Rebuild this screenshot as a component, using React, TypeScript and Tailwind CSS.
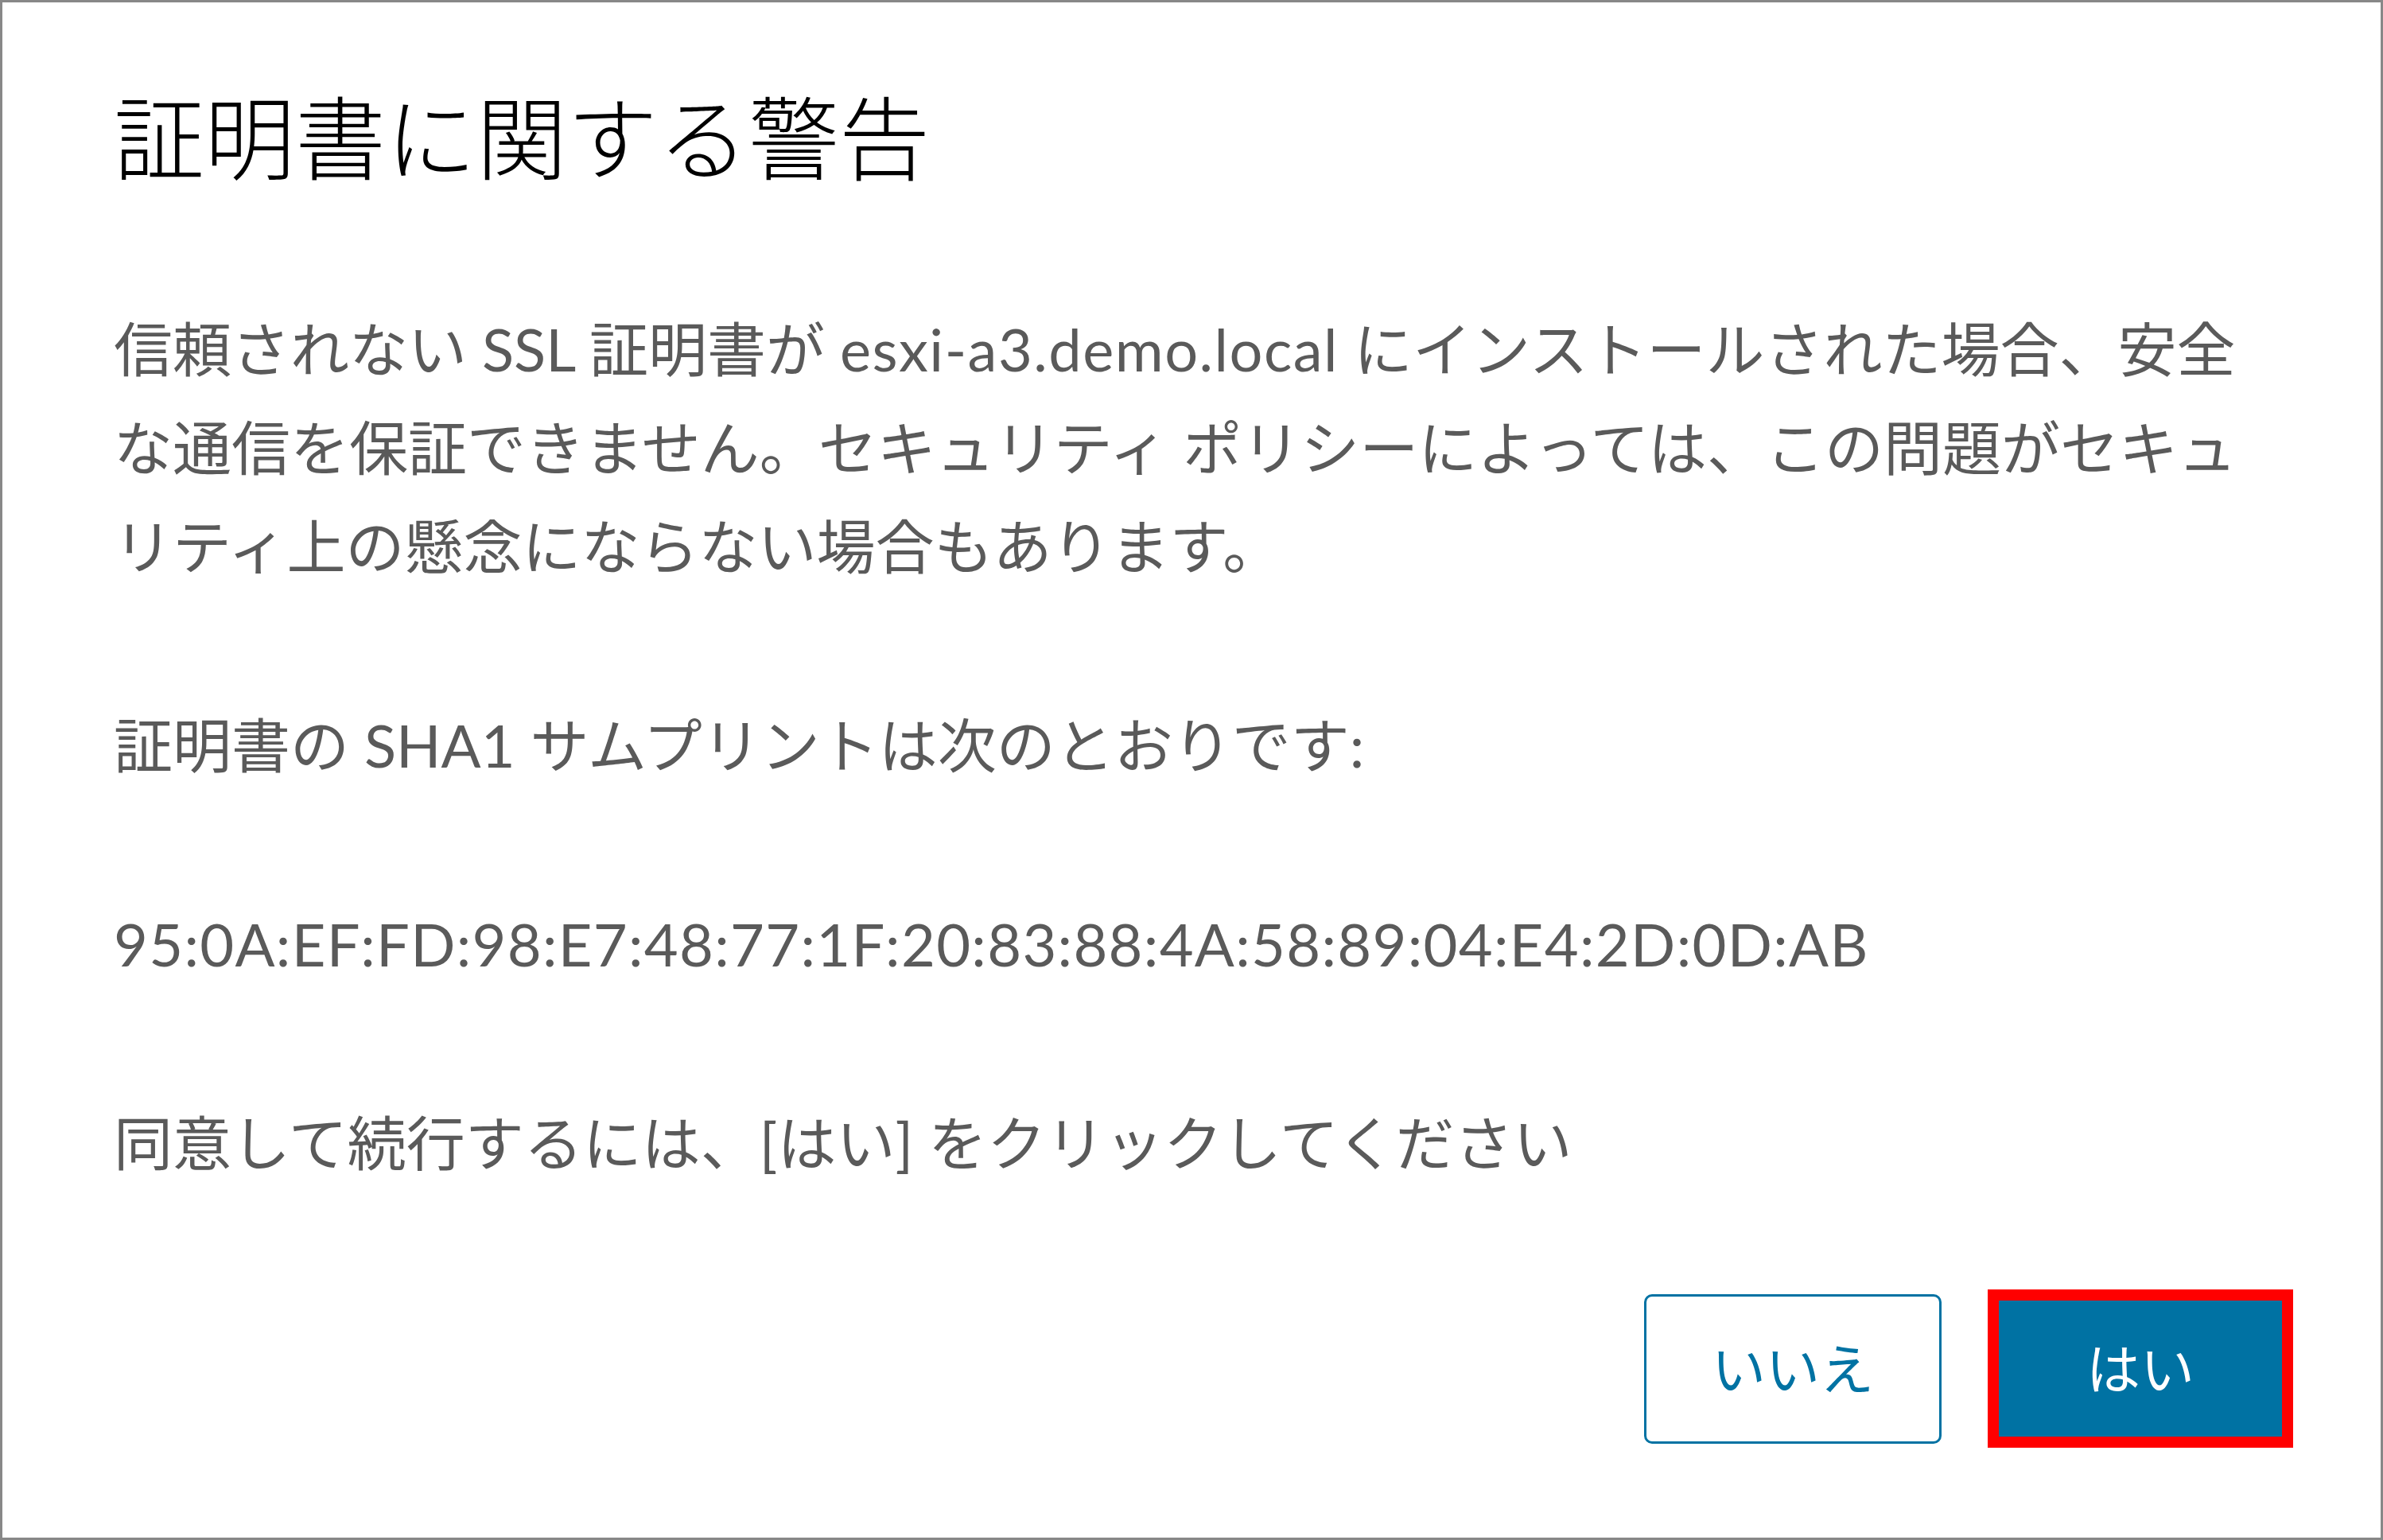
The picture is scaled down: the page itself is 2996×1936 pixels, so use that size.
const font = {
  fontFamily: '"Lato", "Noto Sans CJK JP", sans-serif',
};

export default function App() {
  return (
    <div
      className="w-[2996px] h-[1936px] bg-white border-[3px] border-[#888888] flex flex-col"
      style={font}
    >
      <div className="pl-[140px] pt-[100px]">
        <h1 className="text-[114px] leading-[140px] font-light text-black whitespace-nowrap">
          証明書に関する警告
        </h1>
      </div>

      <div className="pl-[140px] mt-[134px] text-[74px] leading-[124px] font-normal text-[#5a5a5a] whitespace-nowrap">
        <p>
          信頼されない SSL 証明書が <span className="tracking-[1.5px]">esxi-a3.demo.local</span> にインストールされた場合、安全
          <br />
          な通信を保証できません。セキュリティ ポリシーによっては、この問題がセキュ
          <br />
          リティ上の懸念にならない場合もあります。
        </p>
        <p className="mt-[126px]">証明書の SHA1 サムプリントは次のとおりです:</p>
        <p className="mt-[126px] tracking-[1.3px]">
          95:0A:EF:FD:98:E7:48:77:1F:20:83:88:4A:58:89:04:E4:2D:0D:AB
        </p>
        <p className="mt-[126px]">同意して続行するには、[はい] をクリックしてください</p>
      </div>

      <div className="flex justify-end items-center gap-[58px] pr-[110px] mt-[122px]">
        <button className="w-[374px] h-[188px] rounded-[10px] border-[3px] border-[#0072a3] bg-white text-[#0072a3] text-[68px] font-normal">
          いいえ
        </button>
        <button className="w-[384px] h-[199px] border-[14px] border-[#ff0000] bg-[#0072a3] text-white text-[68px] font-normal">
          はい
        </button>
      </div>
    </div>
  );
}
